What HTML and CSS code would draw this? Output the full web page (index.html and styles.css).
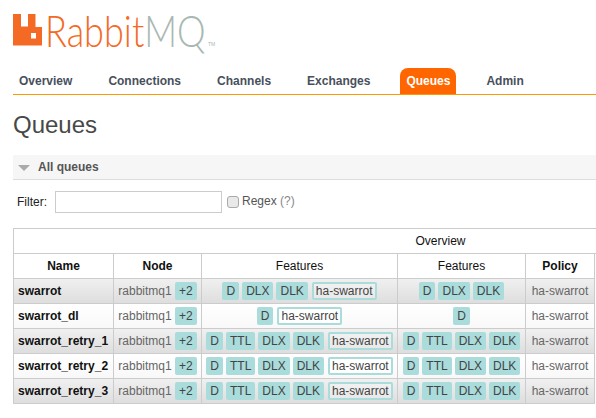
FILE: index.html
```html
<!DOCTYPE html>
<html lang="en">
<head>
<meta charset="utf-8">
<title>RabbitMQ Management</title>
<link rel="stylesheet" href="styles.css">
</head>
<body>
<header class="logo">
  <svg class="logo-mark" width="29" height="32" viewBox="0 0 29 32"><path fill="#f46a25" fill-rule="evenodd" d="M0 0H8V12.500H15V0H22.500V13H29V31.500H0ZM18 19V24.500H23V19Z"/></svg>
  <span class="wordmark"><span class="logo-rabbit">Rabbit</span><span class="logo-mq">MQ</span></span><span class="logo-tm">TM</span>
</header>
<nav class="tabs">
  <a class="tab">Overview</a>
  <a class="tab">Connections</a>
  <a class="tab">Channels</a>
  <a class="tab">Exchanges</a>
  <a class="tab active">Queues</a>
  <a class="tab">Admin</a>
</nav>
<h1>Queues</h1>
<div class="section-head"><span class="arrow"></span>All queues</div>
<div class="filter">
  <label class="filter-label">Filter:</label>
  <input class="filter-input" type="text">
  <input class="filter-check" type="checkbox">
  <span class="regex">Regex <span class="help">(?)</span></span>
</div>
<table class="queues">
  <colgroup><col class="c1"><col class="c2"><col class="c3"><col class="c4"><col class="c5"><col class="c6"></colgroup>
  <thead>
    <tr class="group"><th class="blank" colspan="2"></th><th class="ov" colspan="4">Overview</th></tr>
    <tr class="heads"><th class="b">Name</th><th class="b">Node</th><th>Features</th><th>Features</th><th class="b">Policy</th></tr>
  </thead>
  <tbody>
    <tr class="alt"><td class="name">swarrot</td><td class="node">rabbitmq1 <span class="tag">+2</span></td>
      <td class="f"><span class="tag">D</span><span class="tag">DLX</span><span class="tag">DLK</span><span class="pol">ha-swarrot</span></td>
      <td class="f"><span class="tag">D</span><span class="tag">DLX</span><span class="tag">DLK</span></td><td class="p">ha-swarrot</td></tr>
    <tr><td class="name">swarrot_dl</td><td class="node">rabbitmq1 <span class="tag">+2</span></td>
      <td class="f"><span class="tag">D</span><span class="pol">ha-swarrot</span></td>
      <td class="f"><span class="tag">D</span></td><td class="p">ha-swarrot</td></tr>
    <tr class="alt"><td class="name">swarrot_retry_1</td><td class="node">rabbitmq1 <span class="tag">+2</span></td>
      <td class="f"><span class="tag">D</span><span class="tag">TTL</span><span class="tag">DLX</span><span class="tag">DLK</span><span class="pol">ha-swarrot</span></td>
      <td class="f"><span class="tag">D</span><span class="tag">TTL</span><span class="tag">DLX</span><span class="tag">DLK</span></td><td class="p">ha-swarrot</td></tr>
    <tr><td class="name">swarrot_retry_2</td><td class="node">rabbitmq1 <span class="tag">+2</span></td>
      <td class="f"><span class="tag">D</span><span class="tag">TTL</span><span class="tag">DLX</span><span class="tag">DLK</span><span class="pol">ha-swarrot</span></td>
      <td class="f"><span class="tag">D</span><span class="tag">TTL</span><span class="tag">DLX</span><span class="tag">DLK</span></td><td class="p">ha-swarrot</td></tr>
    <tr class="alt"><td class="name">swarrot_retry_3</td><td class="node">rabbitmq1 <span class="tag">+2</span></td>
      <td class="f"><span class="tag">D</span><span class="tag">TTL</span><span class="tag">DLX</span><span class="tag">DLK</span><span class="pol">ha-swarrot</span></td>
      <td class="f"><span class="tag">D</span><span class="tag">TTL</span><span class="tag">DLX</span><span class="tag">DLK</span></td><td class="p">ha-swarrot</td></tr>
  </tbody>
</table>
</body>
</html>
```
FILE: styles.css
```css
html, body { margin: 0; padding: 0; background: #fff; }
body { font-family: "Liberation Sans", Arial, sans-serif; font-size: 12px; color: #484848; padding-left: 13px; width: 583px; }
.logo { height: 50px; padding-top: 14px; box-sizing: content-box; display: flex; align-items: flex-start; }
.logo-mark { display: block; flex: none; }
.wordmark { display: block; flex: none; width: 158px; margin-left: 3px; height: 32px; white-space: nowrap; transform: scaleX(.82); transform-origin: left top; }
.logo-rabbit, .logo-mq { font-family: "Lato", sans-serif; font-weight: 300; font-size: 44px; line-height: 32px; }
.logo-rabbit { color: #f46a25; }
.logo-mq { color: #a9b8b2; }
.logo-tm { font-size: 5px; line-height: 6px; color: #a9b8b2; margin-top: 27px; margin-left: 5px; }
.tabs { display: flex; height: 26px; border-bottom: 1px solid #f90; margin-top: 4px; box-sizing: content-box; }
.tab { display: block; font-weight: bold; font-size: 12px; line-height: 26px; color: #484f5c; padding: 0 6px; margin-right: 24px; height: 26px; }
.tab.active { background: #f60; color: #fff; border-radius: 8px 8px 0 0; }
h1 { margin: 16px 0 0; font-weight: normal; font-size: 24px; line-height: 28px; color: #484848; }
.section-head { margin-top: 16px; height: 24px; background: #f6f6f6; border-bottom: 1px solid #ddd; font-weight: bold; font-size: 12px; line-height: 24px; color: #555; display: flex; align-items: center; }
.arrow { width: 0; height: 0; border-left: 6px solid transparent; border-right: 6px solid transparent; border-top: 6px solid #aaa; margin: 2px 8px 0 5px; }
.filter { display: flex; align-items: center; height: 22px; margin-top: 11px; }
.filter-label { margin-left: 4px; color: #222; font-size: 12px; }
.filter-input { width: 167px; height: 22px; box-sizing: border-box; margin: 0 0 0 8px; border: 1px solid #ccc; background: #fff; padding: 0; }
.filter-check { appearance: none; width: 12px; height: 12px; box-sizing: border-box; margin: 0 0 0 5px; border: 1px solid #aaa; border-radius: 3px; background: #e9e9e9; }
.regex { margin-left: 3px; color: #555; font-size: 12px; position: relative; top: -1px; }
.help { color: #888; }
.queues { border-collapse: collapse; table-layout: fixed; margin-top: 15px; width: 583px; font-size: 12px; }
.c1 { width: 100px; } .c2 { width: 88px; } .c3 { width: 196px; } .c4 { width: 128px; } .c5 { width: 69px; } .c6 { width: 2px; }
.queues th, .queues td { padding: 0; height: 24px; border: 1px solid #ccc; text-align: center; }
.queues th { font-weight: normal; color: #111; background: #fff; }
.queues .b { font-weight: bold; }
.group th { border-right: 0; }
.group .ov { border-left: 0; padding-left: 83px; }
td.name { text-align: left; font-weight: bold; color: #111; padding-left: 4px; }
td.node { color: #666; white-space: nowrap; }
td.p { color: #666; }
tbody tr { background: linear-gradient(#fff, #f8f8f8); }
tbody tr.alt { background: linear-gradient(#f0f0f0, #ddd); }
.queues td { background: transparent; }
.tag { display: inline-block; background: #aadcdc; color: #444; border-radius: 2px; padding: 0 4px; height: 18px; line-height: 18px; margin-right: 3px; }
.node .tag { margin-right: 0; padding: 0 4px; }
td.f { white-space: nowrap; font-size: 12px; }
.pol { display: inline-block; border: 2px solid #aadcdc; border-radius: 2px; margin-left: 1px; padding: 0 2px; height: 14px; line-height: 14px; color: #444; background: rgba(255,255,255,.25); box-sizing: content-box; }
tr:not(.alt) .pol { background: #fff; }
td.f > :last-child { margin-right: 0; }
```
